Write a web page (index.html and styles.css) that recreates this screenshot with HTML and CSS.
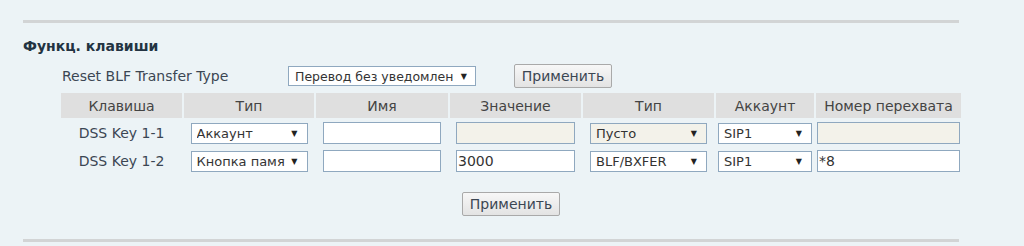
FILE: index.html
```html
<!DOCTYPE html>
<html lang="ru">
<head>
<meta charset="utf-8">
<title>Функц. клавиши</title>
<link rel="stylesheet" href="styles.css">
</head>
<body>
<div class="page">
  <div class="rule"></div>
  <h2 class="title">Функц. клавиши</h2>
  <div class="reset-row">
    <span class="reset-label">Reset BLF Transfer Type</span>
    <div class="select sel-reset"><span class="sel-text">Перевод без уведомлен</span><span class="arrow">▼</span></div>
    <button class="btn">Применить</button>
  </div>
  <div class="grid">
    <div class="th">Клавиша</div>
    <div class="th">Тип</div>
    <div class="th">Имя</div>
    <div class="th">Значение</div>
    <div class="th">Тип</div>
    <div class="th">Аккаунт</div>
    <div class="th">Номер перехвата</div>

    <div class="td">DSS Key 1-1</div>
    <div class="td"><div class="select sel-type"><span class="sel-text">Аккаунт</span><span class="arrow">▼</span></div></div>
    <div class="td"><input class="inp inp-name" type="text" value=""></div>
    <div class="td"><input class="inp inp-val disabled" type="text" value="" disabled></div>
    <div class="td"><div class="select sel-type2 disabled"><span class="sel-text">Пусто</span><span class="arrow">▼</span></div></div>
    <div class="td"><div class="select sel-acc"><span class="sel-text">SIP1</span><span class="arrow">▼</span></div></div>
    <div class="td"><input class="inp inp-num disabled" type="text" value="" disabled></div>

    <div class="td">DSS Key 1-2</div>
    <div class="td"><div class="select sel-type"><span class="sel-text">Кнопка памят</span><span class="arrow">▼</span></div></div>
    <div class="td"><input class="inp inp-name" type="text" value=""></div>
    <div class="td"><input class="inp inp-val" type="text" value="3000"></div>
    <div class="td"><div class="select sel-type2"><span class="sel-text">BLF/BXFER</span><span class="arrow">▼</span></div></div>
    <div class="td"><div class="select sel-acc"><span class="sel-text">SIP1</span><span class="arrow">▼</span></div></div>
    <div class="td"><input class="inp inp-num" type="text" value="*8"></div>
  </div>
  <div class="apply-row"><button class="btn">Применить</button></div>
  <div class="rule rule-bottom"></div>
</div>
</body>
</html>
```
FILE: styles.css
```css
html, body {
  margin: 0;
  padding: 0;
  background: #ecf3f6;
}
body {
  font-family: "DejaVu Sans", Verdana, sans-serif;
  font-size: 14px;
  color: #3b4653;
  width: 1024px;
  height: 246px;
  overflow: hidden;
}
.page {
  padding: 20px 0 0 23px;
  width: 936px;
}
.rule {
  height: 3px;
  background: #d2d4d5;
}
.title {
  margin: 13px 0 0 0;
  font-size: 14px;
  font-weight: bold;
  color: #233342;
  height: 20px;
  line-height: 20px;
}
.reset-row {
  display: flex;
  align-items: center;
  margin-top: 8px;
  height: 24px;
  padding-left: 39px;
}
.reset-label {
  width: 226px;
  color: #3b4653;
}
.select {
  display: flex;
  align-items: center;
  box-sizing: border-box;
  height: 21px;
  background: #fff;
  border: 1px solid #8fa8bf;
  padding: 0 9px 0 5px;
  color: #333;
  font-size: 13px;
}
.select.disabled {
  background: #f3f2ea;
}
.sel-text {
  white-space: nowrap;
  overflow: hidden;
  flex: 1;
  min-width: 0;
}
.arrow {
  flex: none;
  font-size: 8px;
  color: #222;
  margin-left: 6px;
}
.sel-reset {
  width: 188px;
  height: 20px;
  font-size: 12.5px;
  padding: 0 8px 0 6px;
}
.sel-reset .arrow {
  margin-left: 4px;
}
.btn {
  box-sizing: border-box;
  width: 98px;
  height: 24px;
  font-family: "DejaVu Sans", Verdana, sans-serif;
  font-size: 14px;
  color: #3b4653;
  background: linear-gradient(#f7f7f7, #e3e3e3);
  border: 1px solid #a9a9a9;
  border-radius: 2px;
  padding: 0;
}
.reset-row .btn {
  margin-left: 38px;
}
.grid {
  display: grid;
  grid-template-columns: 121px 130px 132px 131px 131px 98px 145px;
  grid-template-rows: 25px 26px 26px;
  gap: 2px;
  margin: 5px 0 0 38px;
}
.th {
  background: #dfdfdf;
  color: #444;
  display: flex;
  align-items: center;
  justify-content: center;
}
.td {
  display: flex;
  align-items: center;
  justify-content: center;
}
.inp {
  box-sizing: border-box;
  height: 22px;
  border: 1px solid #8fa8bf;
  background: #fff;
  font-family: "DejaVu Sans", Verdana, sans-serif;
  font-size: 14px;
  color: #333;
  padding: 0 1px;
  margin: 0;
}
.inp.disabled {
  background: #f3f2ea;
}
.sel-type { width: 117px; }
.inp-name { width: 118px; }
.inp-val { width: 119px; }
.sel-type2 { width: 117px; }
.sel-acc { width: 94px; }
.inp-num { width: 143px; }
.apply-row {
  display: flex;
  justify-content: center;
  padding-left: 40px;
  margin-top: 18px;
}
.rule-bottom {
  margin-top: 23px;
}
```
